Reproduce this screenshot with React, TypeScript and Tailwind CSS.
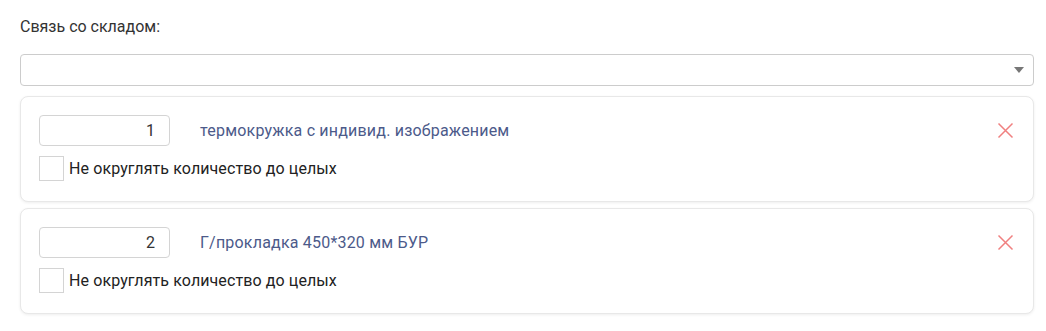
const items = [
  { qty: '1', name: 'термокружка с индивид. изображением' },
  { qty: '2', name: 'Г/прокладка 450*320 мм БУР' },
];

function ItemCard({ qty, name }: { qty: string; name: string }) {
  return (
    <div className="relative rounded-lg border border-[#e8e8e8] bg-white px-[18px] pt-[18px] pb-[20px] shadow-[0_1px_3px_rgba(0,0,0,0.07)]">
      <div className="flex items-center">
        <input
          readOnly
          value={qty}
          className="h-[31px] w-[131px] rounded border border-[#d4d4d4] px-[14px] text-right text-[16px] text-[#333] outline-none"
        />
        <span className="ml-[30px] text-[16px] tracking-[0.2px] text-[#4c5a8a]">{name}</span>
      </div>
      <label className="mt-[10px] flex items-center">
        <span className="h-[25px] w-[25px] border border-[#d4d4d4] bg-white" />
        <span className="ml-[5px] text-[16px] tracking-[0.1px] text-[#222]">Не округлять количество до целых</span>
      </label>
      <button className="absolute right-[19px] top-[25px] text-[#f08080]">
        <svg width="17" height="17" viewBox="0 0 17 17" fill="none" stroke="currentColor" strokeWidth="1.5">
          <path d="M1.5 1.5 L15.5 15.5 M15.5 1.5 L1.5 15.5" />
        </svg>
      </button>
    </div>
  );
}

export default function App() {
  return (
    <div className="min-h-[331px] bg-white pl-5 pr-3 pt-[17px] font-['Roboto',sans-serif]">
      <div className="text-[16px] leading-5 text-[#333]">Связь со складом:</div>
      <div className="mt-[17px] flex h-[32px] items-center justify-end rounded border border-[#ccc] pr-[9px]">
        <svg width="10" height="6" viewBox="0 0 10 6">
          <path d="M0 0 L10 0 L5 6 Z" fill="#777" />
        </svg>
      </div>
      <div className="mt-[10px] flex flex-col gap-[6px]">
        {items.map((it) => (
          <ItemCard key={it.qty} qty={it.qty} name={it.name} />
        ))}
      </div>
    </div>
  );
}
